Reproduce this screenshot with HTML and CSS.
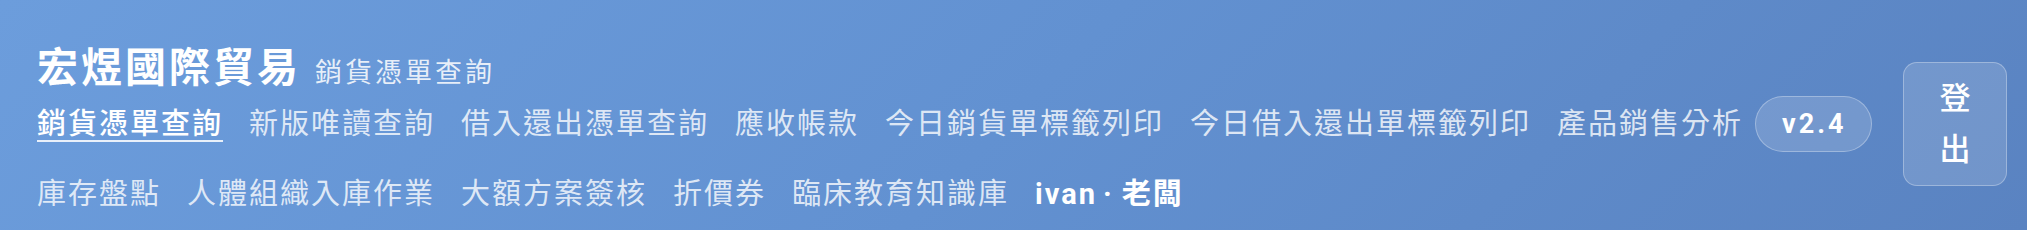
FILE: index.html
```html
<!DOCTYPE html>
<html lang="zh-Hant">
<head>
<meta charset="utf-8">
<title>宏煜國際貿易 - 銷貨憑單查詢</title>
<link rel="stylesheet" href="styles.css">
</head>
<body>
<header class="header">
  <div class="brand">
    <div class="title-row">
      <h1 class="title">宏煜國際貿易</h1>
      <span class="subtitle">銷貨憑單查詢</span>
    </div>
    <nav class="nav">
      <a class="nav-link active" href="#">銷貨憑單查詢</a>
      <a class="nav-link" href="#">新版唯讀查詢</a>
      <a class="nav-link" href="#">借入還出憑單查詢</a>
      <a class="nav-link" href="#">應收帳款</a>
      <a class="nav-link" href="#">今日銷貨單標籤列印</a>
      <a class="nav-link" href="#">今日借入還出單標籤列印</a>
      <a class="nav-link" href="#">產品銷售分析</a>
      <span class="version">v2.4</span>
      <a class="nav-link" href="#">庫存盤點</a>
      <a class="nav-link" href="#">人體組織入庫作業</a>
      <a class="nav-link" href="#">大額方案簽核</a>
      <a class="nav-link" href="#">折價券</a>
      <a class="nav-link" href="#">臨床教育知識庫</a>
      <span class="user">ivan<span class="sep">·</span>老闆</span>
    </nav>
  </div>
  <button class="logout" type="button">登出</button>
</header>
</body>
</html>
```

FILE: styles.css
```css
html, body {
  margin: 0;
  padding: 0;
}

body {
  width: 2027px;
  height: 230px;
  overflow: hidden;
  font-family: Roboto, "Noto Sans CJK TC", "Noto Sans", sans-serif;
}

.header {
  box-sizing: border-box;
  height: 230px;
  display: flex;
  align-items: flex-start;
  gap: 20px;
  padding: 44px 20px 0 37px;
  background: linear-gradient(135deg, #6c9ddc 0%, #6291d1 50%, #5a83c1 100%);
  color: #fff;
}

.brand {
  flex: 1;
  display: flex;
  flex-direction: column;
  gap: 4px;
}

.title-row {
  display: flex;
  align-items: baseline;
  gap: 14px;
}

.title {
  margin: 0;
  font-size: 41px;
  line-height: 48px;
  font-weight: 700;
  letter-spacing: 3px;
  color: #fff;
}

.subtitle {
  font-size: 27px;
  letter-spacing: 3px;
  color: rgba(255, 255, 255, 0.85);
}

.nav {
  display: flex;
  flex-wrap: wrap;
  align-items: center;
  column-gap: 26px;
  row-gap: 22px;
}

.nav-link {
  font-size: 29px;
  line-height: 40px;
  letter-spacing: 2px;
  color: rgba(255, 255, 255, 0.8);
  text-decoration: none;
}

.nav-link.active {
  color: #fff;
  font-weight: 500;
  text-decoration: underline;
  text-decoration-thickness: 2px;
  text-underline-offset: 6px;
  text-decoration-color: rgba(255, 255, 255, 0.85);
}

.version {
  box-sizing: border-box;
  height: 56px;
  display: inline-flex;
  align-items: center;
  margin-left: -14px;
  padding: 0 24px 0 26px;
  border: 1.5px solid rgba(255, 255, 255, 0.3);
  border-radius: 28px;
  background: rgba(255, 255, 255, 0.15);
  font-size: 27px;
  font-weight: 700;
  letter-spacing: 3px;
  color: #fff;
}

.user {
  font-size: 29px;
  line-height: 40px;
  font-weight: 700;
  letter-spacing: 2px;
  color: #fff;
}

.sep {
  margin: 0 8px 0 6px;
}

.logout {
  box-sizing: border-box;
  width: 104px;
  margin-top: 18px;
  padding: 10px 34px;
  border: 1.5px solid rgba(255, 255, 255, 0.3);
  border-radius: 14px;
  background: rgba(255, 255, 255, 0.14);
  font-family: Roboto, "Noto Sans CJK TC", sans-serif;
  font-size: 31px;
  line-height: 51px;
  font-weight: 500;
  color: #fff;
  cursor: pointer;
}
```
